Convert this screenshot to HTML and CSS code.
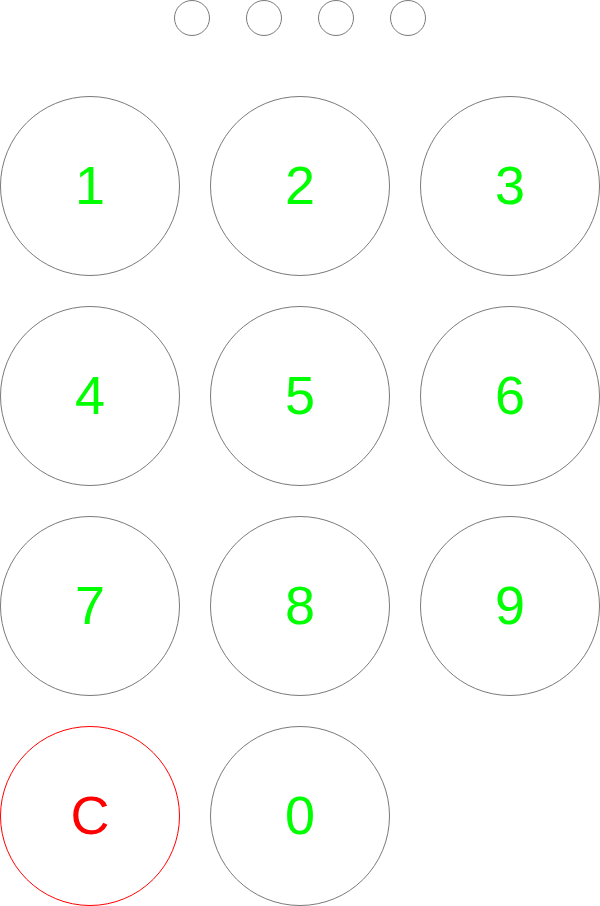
FILE: index.html
```html
<!DOCTYPE html>
<html>
<head>
<meta charset="utf-8">
<link rel="stylesheet" href="styles.css">
</head>
<body>
<div class="pad">
  <div class="dots">
    <span class="dot"></span><span class="dot"></span><span class="dot"></span><span class="dot"></span>
  </div>
  <div class="keys">
    <button class="key">1</button>
    <button class="key">2</button>
    <button class="key">3</button>
    <button class="key">4</button>
    <button class="key">5</button>
    <button class="key">6</button>
    <button class="key">7</button>
    <button class="key">8</button>
    <button class="key">9</button>
    <button class="key clear">C</button>
    <button class="key">0</button>
  </div>
</div>
</body>
</html>
```
FILE: styles.css
```css
html, body {
  margin: 0;
  padding: 0;
  background: #fff;
}
.pad {
  width: 600px;
  display: flex;
  flex-direction: column;
  gap: 60px;
  font-family: "Liberation Sans", Arial, sans-serif;
}
.dots {
  display: flex;
  justify-content: center;
  gap: 36px;
  height: 36px;
}
.dot {
  box-sizing: border-box;
  width: 36px;
  height: 36px;
  border: 1.5px solid #7a7a7a;
  border-radius: 50%;
}
.keys {
  display: grid;
  grid-template-columns: repeat(3, 180px);
  grid-auto-rows: 180px;
  column-gap: 30px;
  row-gap: 30px;
}
.key {
  box-sizing: border-box;
  width: 180px;
  height: 180px;
  margin: 0;
  padding: 0 0 2px 0;
  border: 1px solid #7a7a7a;
  border-radius: 50%;
  background: #fff;
  color: #00ff00;
  font-family: "Liberation Sans", Arial, sans-serif;
  font-size: 54px;
  line-height: 1;
  display: flex;
  align-items: center;
  justify-content: center;
}
.key.clear {
  border-color: #ff0000;
  color: #ff0000;
}
```
